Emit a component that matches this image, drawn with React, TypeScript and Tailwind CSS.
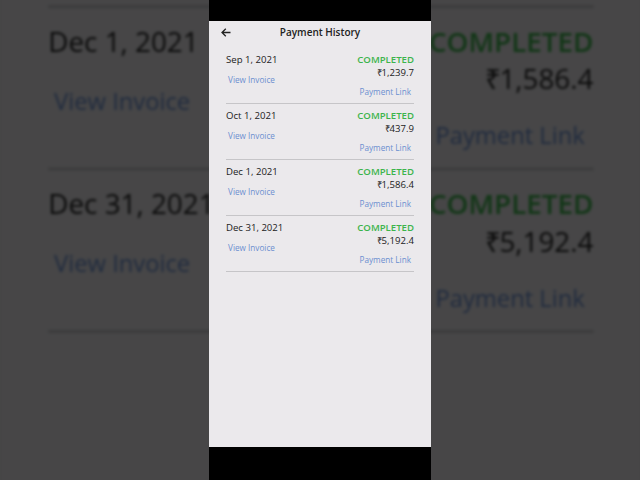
import React from "react";

const rows = [
  { date: "Sep 1, 2021", amount: "₹1,239.7" },
  { date: "Oct 1, 2021", amount: "₹437.9" },
  { date: "Dec 1, 2021", amount: "₹1,586.4" },
  { date: "Dec 31, 2021", amount: "₹5,192.4" },
];

function Screen() {
  return (
    <div className="w-[222px] h-[426px] bg-[#ebe9ec] flex flex-col font-['Open_Sans',sans-serif] text-[#222]">
      <div className="h-[27px] grid grid-cols-[40px_1fr_40px] items-start pt-[4px]">
        <div className="pl-[12px] h-[14px] flex items-center">
          <svg width="10" height="9" viewBox="0 0 10 9" fill="none">
            <path d="M9.5 4.5H1M4.8 0.7L1 4.5L4.8 8.3" stroke="#222" strokeWidth="1.3" />
          </svg>
        </div>
        <div className="text-center text-[10px] leading-[14px] font-semibold">Payment History</div>
        <div />
      </div>
      <div className="px-[17px] flex flex-col">
        {rows.map((r) => (
          <div key={r.date} className="flex justify-between items-start pt-[6px] pb-[5px] border-b border-[#c6c5c8]">
            <div className="flex flex-col items-start">
              <div className="text-[9.6px] leading-[12px]">{r.date}</div>
              <div className="mt-[8px] pl-[2px] text-[8.2px] leading-[12px] text-[#6b8fd0]">View Invoice</div>
            </div>
            <div className="flex flex-col items-end">
              <div className="text-[9.6px] leading-[12px] font-semibold text-[#3cb44b]">COMPLETED</div>
              <div className="text-[9.6px] leading-[13px]">{r.amount}</div>
              <div className="mt-[6px] pr-[3px] text-[8.2px] leading-[13px] text-[#6b8fd0]">Payment Link</div>
            </div>
          </div>
        ))}
      </div>
    </div>
  );
}

export default function App() {
  return (
    <div className="relative w-[640px] h-[480px] overflow-hidden bg-[#474747]">
      <div aria-hidden="true" className="absolute left-[-1px] top-[-395px] origin-top-left scale-[2.9] brightness-[0.3] blur-[0.6px]">
        <Screen />
      </div>
      <div className="relative h-full flex justify-center">
        <div className="w-[222px] h-full flex flex-col bg-black">
          <div className="h-[21px]" />
          <Screen />
        </div>
      </div>
    </div>
  );
}
